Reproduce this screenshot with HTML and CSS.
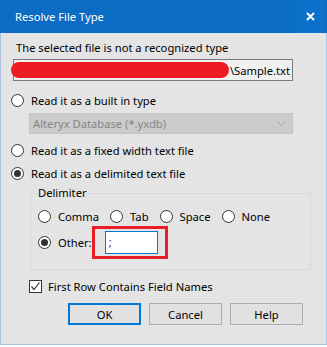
FILE: index.html
```html
<!DOCTYPE html>
<html lang="en">
<head>
    <meta charset="UTF-8">
    <meta name="viewport" content="width=device-width, initial-scale=1.0">
    <title>Resolve File Type</title>
    <link rel="stylesheet" href="styles.css">
</head>
<body>
    <div class="window">
        <div class="titlebar">
            <span class="title">Resolve File Type</span>
            <span class="close">
                <svg width="9" height="9" viewBox="0 0 9 9">
                    <path d="M1 1 L8 8 M8 1 L1 8" stroke="#fff" stroke-width="2" fill="none"/>
                </svg>
            </span>
        </div>

        <div class="content">
            <p class="msg">The selected file is not a recognized type</p>
            <div class="path">
                <span class="redact"></span>
                <span class="path-text">\Sample.txt</span>
            </div>

            <label class="radio row-1"><span class="dot"></span>Read it as a built in type</label>
            <div class="select">
                <span>Alteryx Database (*.yxdb)</span>
                <svg width="9" height="5" viewBox="0 0 9 5">
                    <path d="M0.5 0.5 L4.5 4.5 L8.5 0.5" stroke="#a8a8a8" stroke-width="1" fill="none"/>
                </svg>
            </div>
            <label class="radio row-2"><span class="dot"></span>Read it as a fixed width text file</label>
            <label class="radio row-3"><span class="dot checked"></span>Read it as a delimited text file</label>

            <fieldset class="group">
                <legend>Delimiter</legend>
                <div class="options">
                    <label class="radio"><span class="dot"></span>Comma</label>
                    <label class="radio"><span class="dot"></span>Tab</label>
                    <label class="radio"><span class="dot"></span>Space</label>
                    <label class="radio"><span class="dot"></span>None</label>
                </div>
                <div class="options other">
                    <label class="radio"><span class="dot checked"></span>Other:</label>
                    <div class="highlight">
                        <div class="input">;</div>
                    </div>
                </div>
            </fieldset>

            <label class="check">
                <span class="box">
                    <svg width="11" height="11" viewBox="0 0 11 11">
                        <path d="M1.5 5.5 L4 8.5 L9.5 1.5" stroke="#333" stroke-width="1.2" fill="none"/>
                    </svg>
                </span>
                First Row Contains Field Names
            </label>

            <div class="buttons">
                <button class="btn default">OK</button>
                <button class="btn">Cancel</button>
                <button class="btn">Help</button>
            </div>
        </div>
    </div>
</body>
</html>
```
FILE: styles.css
```css
body{
    margin: 0;
    background: #ffffff;
    font-family: "Noto Sans", "DejaVu Sans", sans-serif;
    font-size: 11.2px;
    color: #000;
}

.window{
    width: 327px;
    height: 345px;
    box-sizing: border-box;
    border: 1px solid #a9c4e2;
    border-top: none;
    background: #e4e4e4;
}

.titlebar{
    height: 33px;
    margin: 0 -1px;
    background: #0b6cc3;
    display: flex;
    align-items: center;
    justify-content: space-between;
}

.titlebar .title{
    color: #fff;
    padding-left: 15px;
}

.titlebar .close{
    width: 30px;
    height: 33px;
    margin-right: 2px;
    background: #0d71cb;
    display: flex;
    align-items: center;
    justify-content: center;
}

.content{
    padding-left: 10px;
}

.msg{
    margin: 0;
    padding: 5px 0 0 5px;
    line-height: 20px;
}

/* 경로 박스 */
.path{
    position: relative;
    margin: 1px 0 0 2px;
    width: 280px;
    height: 22px;
    box-sizing: border-box;
    border: 1px solid #7a7a7a;
    background: #f0f0f0;
    display: flex;
    align-items: center;
    justify-content: flex-end;
    padding-right: 2px;
}

/* 가림 표시 (박스 위에 겹침) */
.redact{
    position: absolute;
    left: -3px;
    top: 2px;
    width: 218px;
    height: 16px;
    border-radius: 8px;
    background: #ed1c24;
}

.radio{
    display: flex;
    align-items: center;
    height: 20px;
    white-space: nowrap;
}

.dot{
    width: 13px;
    height: 13px;
    box-sizing: border-box;
    border: 1px solid #333;
    border-radius: 50%;
    background: #fff;
    margin-right: 7px;
    display: flex;
    align-items: center;
    justify-content: center;
}

.dot.checked::after{
    content: "";
    width: 7px;
    height: 7px;
    border-radius: 50%;
    background: #333;
}

.row-1{
    margin-top: 9px;
}

.row-2{
    margin-top: 6px;
}

.row-3{
    margin-top: 3px;
}

.select{
    margin: 3px 0 0 18px;
    width: 264px;
    height: 21px;
    box-sizing: border-box;
    border: 1px solid #c4c4c4;
    background: #cccccc;
    color: #858585;
    display: flex;
    align-items: center;
    justify-content: space-between;
    padding: 0 6px 0 3px;
}

/* 구분자 그룹 */
.group{
    margin: 2px 0 0 19px;
    width: 281px;
    box-sizing: border-box;
    border: 1px solid #d8d8d8;
    padding: 0 0 10px 7px;
}

.group legend{
    padding: 0 1px;
    margin-left: -1px;
    line-height: 16px;
}

.options{
    display: flex;
    align-items: center;
    gap: 11px;
    height: 19px;
    margin-top: 6px;
}

.options.other{
    height: 33px;
    margin-top: 0;
    gap: 0;
}

.highlight{
    border: 3px solid #e81d25;
    padding: 2px 7px 2px 10px;
}

.input{
    width: 53px;
    height: 23px;
    box-sizing: border-box;
    border: 1px solid #0078d7;
    background: #fff;
    color: #4b2a78;
    padding-left: 3px;
    line-height: 20px;
}

.check{
    display: flex;
    align-items: center;
    height: 20px;
    margin: 6px 0 0 18px;
}

.check .box{
    width: 13px;
    height: 13px;
    box-sizing: border-box;
    border: 1px solid #333;
    background: #fff;
    margin-right: 6px;
    display: flex;
    align-items: center;
    justify-content: center;
}

.buttons{
    display: flex;
    gap: 8px;
    margin: 7px 0 0 57px;
}

.btn{
    width: 73px;
    height: 22px;
    box-sizing: border-box;
    border: 1px solid #adadad;
    background: #e1e1e1;
    font-family: inherit;
    font-size: 11.2px;
    padding: 0;
}

.btn.default{
    border: 2px solid #0078d7;
}
```
